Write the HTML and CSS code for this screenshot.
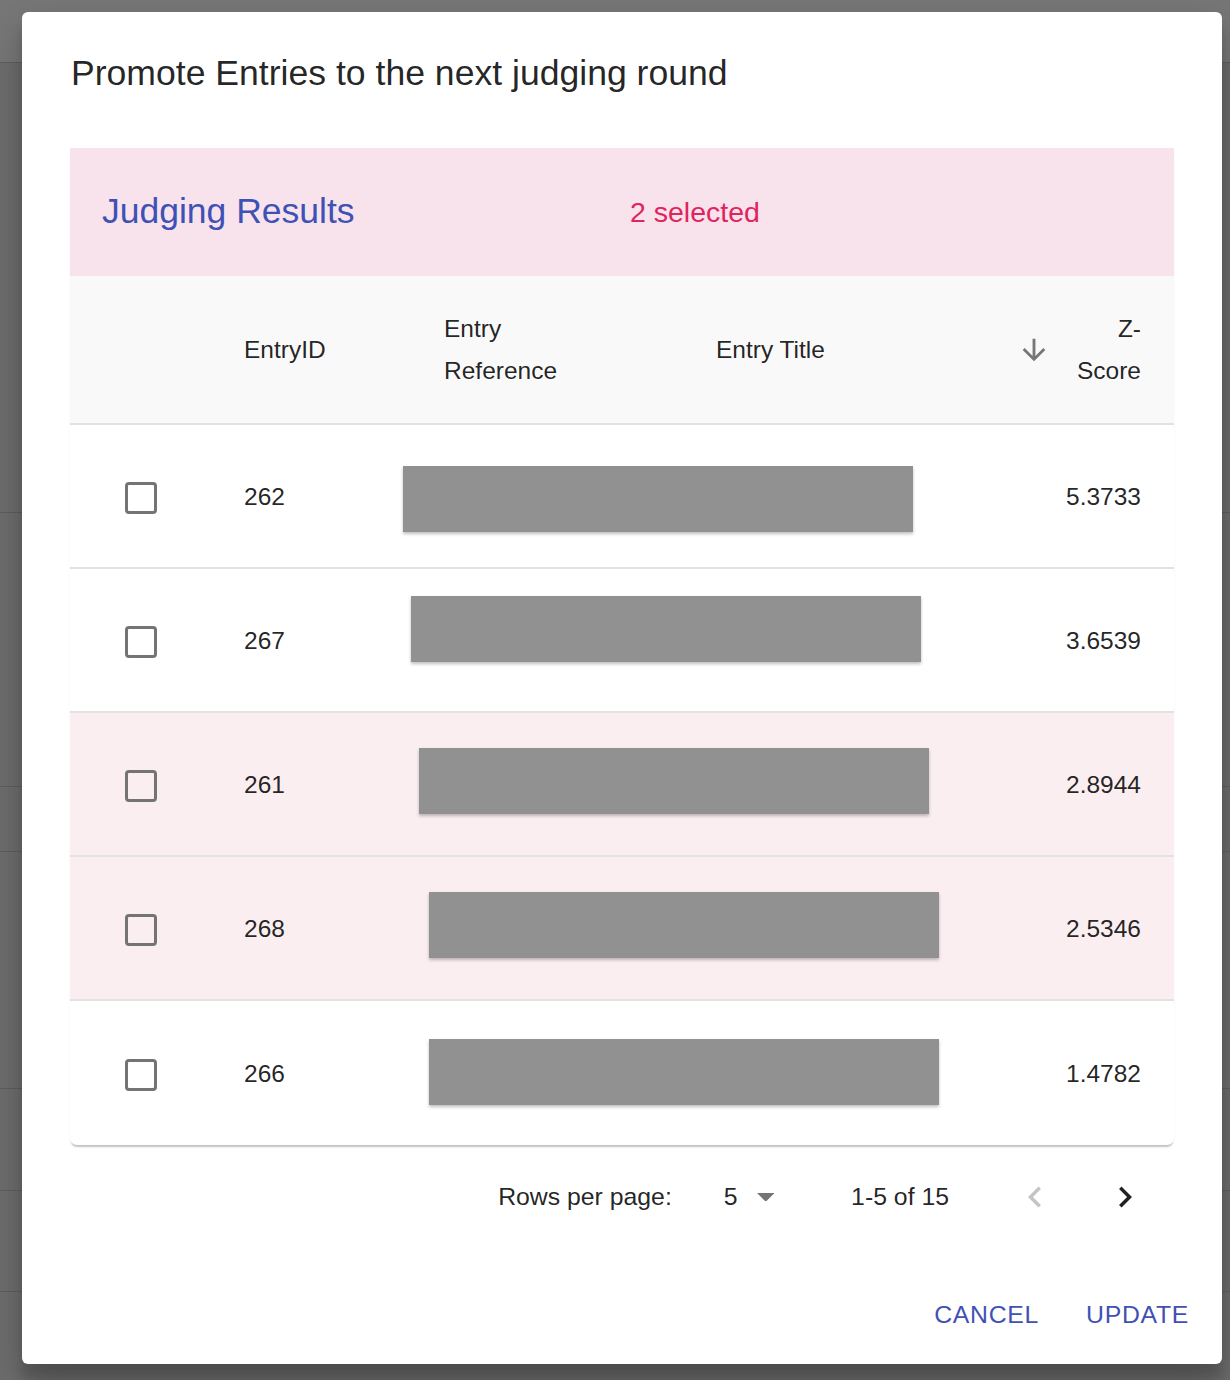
FILE: index.html
```html
<!DOCTYPE html>
<html lang="en">
<head>
<meta charset="utf-8">
<title>Promote Entries</title>
<link rel="stylesheet" href="styles.css">
</head>
<body>
<div class="page">
  <div class="bg-row bg-top"></div>
  <div class="bg-row bg-a"></div>
  <div class="bg-row bg-b"></div>
  <div class="bg-row bg-c"></div>
  <div class="bg-row bg-d"></div>
  <div class="bg-row bg-e"></div>
  <div class="bg-row bg-f"></div>
  <div class="bg-row bg-g"></div>
</div>

<div class="dialog" role="dialog">
  <h2 class="dialog-title">Promote Entries to the next judging round</h2>
  <div class="dialog-content">
    <div class="paper">
      <div class="toolbar">
        <div class="toolbar-title">Judging Results</div>
        <div class="toolbar-selected">2 selected</div>
      </div>
      <div class="trow thead">
        <div class="cell cell-check"></div>
        <div class="cell cell-id">EntryID</div>
        <div class="cell cell-ref"><span class="wrap-ref">Entry Reference</span></div>
        <div class="cell cell-title">Entry Title</div>
        <div class="cell cell-score">
          <svg class="sort-icon" viewBox="0 0 24 24"><path d="M20 12l-1.41-1.41L13 16.170V4h-2v12.17l-5.58-5.59L4 12l8 8 8-8z"/></svg>
          <span class="wrap-score">Z-<wbr>Score</span>
        </div>
      </div>
      <div class="trow">
        <div class="cell cell-check"><span class="checkbox"></span></div>
        <div class="cell cell-id">262</div>
        <div class="cell cell-ref"></div>
        <div class="cell cell-title"></div>
        <div class="cell cell-score">5.3733</div>
      </div>
      <div class="trow">
        <div class="cell cell-check"><span class="checkbox"></span></div>
        <div class="cell cell-id">267</div>
        <div class="cell cell-ref"></div>
        <div class="cell cell-title"></div>
        <div class="cell cell-score">3.6539</div>
      </div>
      <div class="trow selected">
        <div class="cell cell-check"><span class="checkbox"></span></div>
        <div class="cell cell-id">261</div>
        <div class="cell cell-ref"></div>
        <div class="cell cell-title"></div>
        <div class="cell cell-score">2.8944</div>
      </div>
      <div class="trow selected">
        <div class="cell cell-check"><span class="checkbox"></span></div>
        <div class="cell cell-id">268</div>
        <div class="cell cell-ref"></div>
        <div class="cell cell-title"></div>
        <div class="cell cell-score">2.5346</div>
      </div>
      <div class="trow last">
        <div class="cell cell-check"><span class="checkbox"></span></div>
        <div class="cell cell-id">266</div>
        <div class="cell cell-ref"></div>
        <div class="cell cell-title"></div>
        <div class="cell cell-score">1.4782</div>
      </div>

      <div class="redact redact-1"></div>
      <div class="redact redact-2"></div>
      <div class="redact redact-3"></div>
      <div class="redact redact-4"></div>
      <div class="redact redact-5"></div>
    </div>

    <div class="pagination">
      <span class="pg-caption">Rows per page:</span>
      <span class="pg-select">
        <span class="pg-value">5</span>
        <svg class="pg-drop" viewBox="7 10 10 5"><path d="M7 10l5 5 5-5z"/></svg>
      </span>
      <span class="pg-rows">1-5 of 15</span>
      <span class="pg-btn disabled">
        <svg viewBox="0 0 24 24"><path d="M15.41 16.59L10.83 12l4.58-4.59L14 6l-6 6 6 6 1.41-1.41z"/></svg>
      </span>
      <span class="pg-btn">
        <svg viewBox="0 0 24 24"><path d="M8.59 16.59L13.17 12 8.59 7.41 10 6l6 6-6 6-1.41-1.41z"/></svg>
      </span>
    </div>
  </div>
  <div class="dialog-actions">
    <button class="btn" type="button">Cancel</button>
    <button class="btn" type="button">Update</button>
  </div>
</div>
</body>
</html>
```

FILE: styles.css
```css
* { box-sizing: border-box; }

html, body {
  margin: 0;
  padding: 0;
}

body {
  width: 1230px;
  height: 1380px;
  overflow: hidden;
  background: #6c6c6c;
  font-family: "Liberation Sans", Arial, Helvetica, sans-serif;
  color: rgba(0, 0, 0, 0.87);
  position: relative;
}

/* backdrop page (dimmed underlying content) */
.page {
  display: flex;
  flex-direction: column;
}
.bg-row {
  border-bottom: 1px solid #5d5d5d;
}
.bg-top { height: 63px; background: #767676; }
.bg-a { height: 450px; }
.bg-b { height: 274px; }
.bg-c { height: 65px; }
.bg-d { height: 237px; }
.bg-e { height: 102px; }
.bg-f { height: 101px; }
.bg-g { height: 88px; border-bottom: none; }

/* dialog */
.dialog {
  position: absolute;
  left: 22px;
  top: 12px;
  width: 1200px;
  height: 1352px;
  background: #fff;
  border-radius: 6px;
  display: flex;
  flex-direction: column;
  box-shadow: 0 19px 38px rgba(0,0,0,0.2), 0 15px 12px rgba(0,0,0,0.14);
}

.dialog-title {
  margin: 0;
  padding: 33px 48px 0 49px;
  font-size: 35.6px;
  line-height: 56px;
  font-weight: 400;
  color: rgba(0, 0, 0, 0.87);
}

.dialog-content {
  padding: 47px 48px 0;
}

.paper {
  position: relative;
  background: #fff;
  border-radius: 0 0 7px 7px;
  box-shadow: 0 3px 2px -1px rgba(0,0,0,0.22), 0 2px 3px -2px rgba(0,0,0,0.12);
}

.toolbar {
  height: 128px;
  background: #f8e3ed;
  display: flex;
  align-items: center;
  padding-left: 32px;
}
.toolbar-title {
  width: 528px;
  font-size: 35.5px;
  color: #3f51b5;
  line-height: 1;
}
.toolbar-selected {
  font-size: 28.5px;
  color: #e0245e;
}

.trow {
  display: grid;
  grid-template-columns: 142px 200px 272px 320px 170px;
  align-items: center;
  height: 144px;
  border-bottom: 2px solid #e2e2e2;
  font-size: 24.5px;
  line-height: 42px;
}
.trow.thead {
  height: 149px;
  background: #f9f9f9;
}
.trow.selected {
  background: #faeef1;
}
.trow.last {
  border-bottom: none;
}

.cell-check {
  display: flex;
  justify-content: center;
}
.checkbox {
  display: block;
  width: 32px;
  height: 32px;
  margin-top: 2px;
  border: 3.5px solid #747474;
  border-radius: 4px;
}
.cell-id, .cell-ref, .cell-title {
  padding-left: 32px;
}
.trow:not(.thead) .cell {
  padding-top: 2px;
}
.wrap-ref {
  display: inline-block;
  max-width: 130px;
}
.cell-score {
  padding-right: 33px;
  text-align: right;
  display: flex;
  justify-content: flex-end;
  align-items: center;
}
.sort-icon {
  width: 34px;
  height: 34px;
  fill: #767676;
  margin-right: 24px;
}
.wrap-score {
  display: inline-block;
  width: 66px;
  text-align: right;
}

/* redaction bars laid over the title/reference cells */
.redact {
  position: absolute;
  width: 510px;
  height: 66px;
  background: #919191;
  box-shadow: 0 2px 3px rgba(0,0,0,0.25);
}
.redact-1 { left: 333px; top: 318px; }
.redact-2 { left: 341px; top: 448px; }
.redact-3 { left: 349px; top: 600px; }
.redact-4 { left: 359px; top: 744px; }
.redact-5 { left: 359px; top: 891px; }

/* pagination */
.pagination {
  height: 104px;
  display: flex;
  align-items: center;
  justify-content: flex-end;
  padding-right: 4px;
  font-size: 24.8px;
  color: rgba(0, 0, 0, 0.87);
}
.pg-caption {
  margin-right: 52px;
}
.pg-select {
  display: flex;
  align-items: center;
  margin-right: 77px;
}
.pg-value {
  margin-right: 19px;
}
.pg-drop {
  width: 17.5px;
  height: 8.75px;
  fill: #757575;
}
.pg-rows {
  margin-right: 41px;
}
.pg-btn {
  width: 90px;
  height: 84px;
  display: flex;
  align-items: center;
  justify-content: center;
}
.pg-btn svg {
  width: 42px;
  height: 42px;
  fill: rgba(0, 0, 0, 0.87);
}
.pg-btn.disabled svg {
  fill: #c4c4c4;
}

/* actions */
.dialog-actions {
  margin-top: auto;
  padding: 0 19px 28px 0;
  display: flex;
  justify-content: flex-end;
  gap: 19px;
}
.btn {
  border: none;
  background: transparent;
  font-family: "Liberation Sans", Arial, Helvetica, sans-serif;
  font-size: 24.8px;
  letter-spacing: 0.7px;
  line-height: 42px;
  text-transform: uppercase;
  color: #3f51b5;
  padding: 0 14px;
  margin: 0;
}
```
